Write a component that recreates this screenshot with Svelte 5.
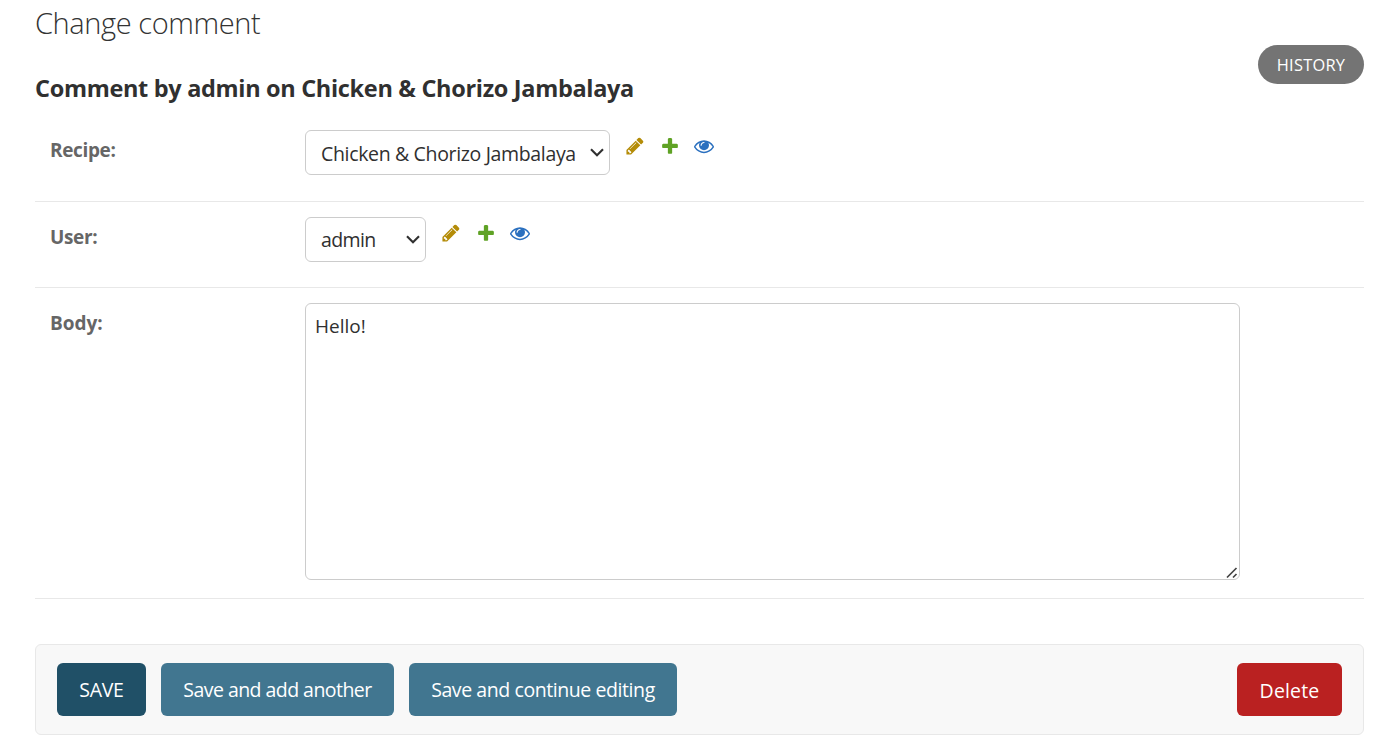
<script>
  const rows = [
    { id: 'recipe', label: 'Recipe:', value: 'Chicken & Chorizo Jambalaya', width: 305 },
    { id: 'user', label: 'User:', value: 'admin', width: 121 }
  ];
  let body = $state('Hello!');
</script>

<main>
  <h1>Change comment</h1>
  <div class="head">
    <h2>Comment by admin on Chicken &amp; Chorizo Jambalaya</h2>
    <a class="history" href="#history">HISTORY</a>
  </div>
  <form onsubmit={(e) => e.preventDefault()}>
    {#each rows as row}
      <div class="row">
        <label for={row.id}>{row.label}</label>
        <div class="select" style:width="{row.width}px">
          <select id={row.id}><option>{row.value}</option></select>
          <svg class="arrow" viewBox="0 0 14 9"><path d="M1 1.3 7 7.3 13 1.3" fill="none" stroke="#303030" stroke-width="2.1" /></svg>
        </div>
        <div class="links">
          <svg viewBox="0 0 1792 1792"><path fill="#b48c08" d="M491 1536l91-91-235-235-91 91v107h128v128h107zm523-928q0-22-22-22-10 0-17 7l-542 542q-7 7-7 17 0 22 22 22 10 0 17-7l542-542q7-7 7-17zm-54-192l416 416-832 832h-416v-416zm683 96q0 53-37 90l-166 166-416-416 166-165q36-38 90-38 53 0 91 38l235 234q37 39 37 91z" /></svg>
          <svg viewBox="0 0 1792 1792"><path fill="#5fa225" d="M1600 796v192q0 40-28 68t-68 28h-416v416q0 40-28 68t-68 28h-192q-40 0-68-28t-28-68v-416h-416q-40 0-68-28t-28-68v-192q0-40 28-68t68-28h416v-416q0-40 28-68t68-28h192q40 0 68 28t28 68v416h416q40 0 68 28t28 68z" /></svg>
          <svg viewBox="0 0 1792 1792"><path fill="#2b70bf" d="M1664 960q-152-236-381-353 61 104 61 225 0 185-131.5 316.5t-316.5 131.5-316.5-131.5-131.5-316.5q0-121 61-225-229 117-381 353 133 205 333.5 326.5t434.5 121.5 434.5-121.5 333.5-326.5zm-720-384q0-20-14-34t-34-14q-125 0-214.5 89.5t-89.5 214.5q0 20 14 34t34 14 34-14 14-34q0-86 61-147t147-61q20 0 34-14t14-34zm848 384q0 34-20 69-140 230-376.5 368.5t-499.5 138.5-499.5-139-376.5-368q-20-35-20-69t20-69q140-229 376.5-368t499.5-139 499.5 139 376.5 368q20 35 20 69z" /></svg>
        </div>
      </div>
    {/each}
    <div class="row body-row">
      <label for="body">Body:</label>
      <div class="area">
        <textarea id="body" bind:value={body}></textarea>
        <svg class="grip" viewBox="0 0 12 12"><path d="M1 10.5 10.5 1M7 10.5 10.5 7" stroke="#444" stroke-width="1.7" /></svg>
      </div>
    </div>
    <div class="submit">
      <button class="save">SAVE</button>
      <button class="another">Save and add another</button>
      <button class="continue">Save and continue editing</button>
      <a class="delete" href="#delete">Delete</a>
    </div>
  </form>
</main>

<style>
  :global(body) { margin: 0; background: #fff; overflow: hidden; }
  main { box-sizing: border-box; width: 1392px; height: 756px; padding: 3px 28px 0 35px; font-family: "Open Sans", "Noto Sans", sans-serif; color: #303030; }
  h1 { margin: 0; height: 40px; line-height: 39px; font-size: 29px; font-weight: 300; letter-spacing: -0.4px; color: #333; }
  .head { display: flex; justify-content: space-between; height: 72px; }
  h2 { margin: 28px 0 0; height: 34px; line-height: 34px; font-size: 23.5px; font-weight: 700; letter-spacing: -0.32px; white-space: nowrap; }
  .history { margin-top: 2px; width: 106px; height: 39px; line-height: 39px; border-radius: 20px; background: #747474; color: #fff; text-align: center; text-decoration: none; font-size: 16.4px; letter-spacing: 0.25px; }
  .row { box-sizing: border-box; display: flex; align-items: flex-start; height: 87px; padding: 15px 0 0 15px; border-bottom: 1px solid #e8e8e8; }
  .row:nth-child(2) { height: 86px; }
  .row:nth-child(2) select { padding-top: 0; letter-spacing: -0.6px; }
  label { width: 255px; padding-top: 5px; line-height: 30px; font-size: 19px; font-weight: 700; letter-spacing: -0.35px; color: #666; }
  .body-row label { letter-spacing: 0; }
  .select { position: relative; height: 45px; }
  select { appearance: none; box-sizing: border-box; width: 100%; height: 45px; margin: 0; padding: 2px 0 0 15px; border: 1px solid #ccc; border-radius: 6px; background: #fff; font: 19.5px "Open Sans", sans-serif; letter-spacing: -0.34px; color: #303030; }
  .arrow { position: absolute; right: 6px; top: 18px; width: 14px; height: 9px; }
  .links { display: flex; gap: 14.5px; padding: 6px 0 0 15px; }
  .links svg { width: 20px; height: 20px; }
  .body-row { height: 311px; }
  .area { position: relative; width: 935px; height: 277px; }
  textarea { display: block; box-sizing: border-box; width: 935px; height: 277px; margin: 0; padding: 8px 9px; border: 1px solid #ccc; border-radius: 6px; resize: none; font: 19px/28px "Open Sans", sans-serif; color: #303030; }
  .grip { position: absolute; right: 2px; bottom: 1px; width: 12px; height: 12px; }
  .submit { box-sizing: border-box; display: flex; gap: 15px; height: 91px; margin-top: 45px; padding: 18px 21px; border: 1px solid #e8e8e8; border-radius: 6px; background: #f8f8f8; }
  button, .delete { box-sizing: border-box; height: 53px; line-height: 53px; margin: 0; padding: 0; border: 0; border-radius: 6px; color: #fff; text-align: center; text-decoration: none; font-family: inherit; font-size: 19.5px; white-space: nowrap; }
  .save { width: 89px; background: #205067; letter-spacing: -0.3px; }
  .another { width: 233px; background: #417690; letter-spacing: -0.54px; }
  .continue { width: 268px; background: #417690; letter-spacing: -0.42px; }
  .delete { width: 105px; margin-left: auto; background: #ba2121; letter-spacing: 0.15px; line-height: 55px; }
</style>
